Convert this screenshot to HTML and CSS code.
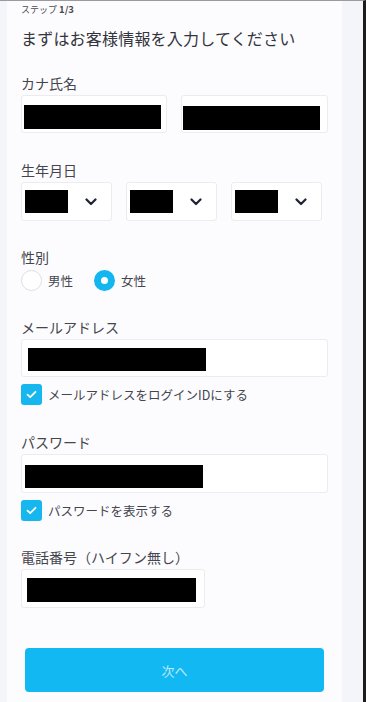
FILE: index.html
```html
<!DOCTYPE html>
<html>
<head>
    <meta charset="utf-8">
    <link rel="stylesheet" href="styles.css">
</head>
<body>
    <div class="page">
        <div class="panel">
            <div class="step">ステップ <b>1/3</b></div>
            <h1 class="title">まずはお客様情報を入力してください</h1>

            <div class="field">
                <div class="label">カナ氏名</div>
                <div class="row">
                    <div class="input input-name"><span class="redact redact-name"></span></div>
                    <div class="input input-name"><span class="redact redact-name"></span></div>
                </div>
            </div>

            <div class="field field-date">
                <div class="label">生年月日</div>
                <div class="row">
                    <div class="input select">
                        <span class="redact redact-date"></span>
                        <svg class="chevron" width="12" height="8" viewBox="0 0 12 8"><path d="M1.5 1.5 6 6l4.5-4.5" fill="none" stroke="#1e2235" stroke-width="2.2" stroke-linecap="round" stroke-linejoin="round"/></svg>
                    </div>
                    <div class="input select">
                        <span class="redact redact-date"></span>
                        <svg class="chevron" width="12" height="8" viewBox="0 0 12 8"><path d="M1.5 1.5 6 6l4.5-4.5" fill="none" stroke="#1e2235" stroke-width="2.2" stroke-linecap="round" stroke-linejoin="round"/></svg>
                    </div>
                    <div class="input select">
                        <span class="redact redact-date"></span>
                        <svg class="chevron" width="12" height="8" viewBox="0 0 12 8"><path d="M1.5 1.5 6 6l4.5-4.5" fill="none" stroke="#1e2235" stroke-width="2.2" stroke-linecap="round" stroke-linejoin="round"/></svg>
                    </div>
                </div>
            </div>

            <div class="field">
                <div class="label">性別</div>
                <div class="radios">
                    <label class="radio"><span class="radio-dot"></span>男性</label>
                    <label class="radio"><span class="radio-dot checked"></span>女性</label>
                </div>
            </div>

            <div class="field">
                <div class="label">メールアドレス</div>
                <div class="input input-email"><span class="redact redact-long"></span></div>
                <label class="check">
                    <span class="check-box"><svg width="11" height="9" viewBox="0 0 11 9"><path d="M1.5 4.6 4.2 7.2 9.5 1.8" fill="none" stroke="#fff" stroke-width="1.8" stroke-linecap="round" stroke-linejoin="round"/></svg></span>
                    メールアドレスをログインIDにする
                </label>
            </div>

            <div class="field field-pass">
                <div class="label">パスワード</div>
                <div class="input input-pass"><span class="redact redact-long"></span></div>
                <label class="check">
                    <span class="check-box"><svg width="11" height="9" viewBox="0 0 11 9"><path d="M1.5 4.6 4.2 7.2 9.5 1.8" fill="none" stroke="#fff" stroke-width="1.8" stroke-linecap="round" stroke-linejoin="round"/></svg></span>
                    パスワードを表示する
                </label>
            </div>

            <div class="field">
                <div class="label">電話番号（ハイフン無し）</div>
                <div class="input input-phone"><span class="redact redact-phone"></span></div>
            </div>

            <button class="next">次へ</button>
        </div>
        <div class="side"></div>
    </div>
</body>
</html>
```

FILE: styles.css
```css
html, body {
    margin: 0;
    padding: 0;
}
body {
    background: #f4f5f9;
    font-family: "Noto Sans CJK JP", "Noto Sans", sans-serif;
    color: #3d3e46;
}
.page {
    display: flex;
    height: 702px;
    border-top: 1px solid #9a9aa0;
    border-right: 3px solid #1c1c1e;
    box-sizing: border-box;
    width: 366px;
}
.panel {
    margin-left: 7px;
    width: 335px;
    background: #fcfcfe;
    padding: 1px 14px 0 14px;
    box-sizing: border-box;
}
.side {
    flex: 1;
}
.step {
    font-size: 9px;
    line-height: 14px;
    height: 14px;
    overflow: hidden;
    color: #4a4a52;
}
.step b {
    font-weight: bold;
    font-size: 9.5px;
}
.title {
    margin: 10px 0 0;
    font-size: 16px;
    line-height: 24px;
    height: 24px;
    font-weight: normal;
    letter-spacing: 0.2px;
    color: #33343c;
}
.field {
    margin-top: 23px;
}
.field + .field {
    margin-top: 26px;
}
.field + .field-date,
.field + .field-pass {
    margin-top: 27px;
}
.label {
    font-size: 14px;
    line-height: 20px;
    height: 20px;
    margin-bottom: 2px;
    color: #44454d;
}
.row {
    display: flex;
    gap: 14px;
}
.input {
    background: #fff;
    border: 1px solid #ebebf0;
    border-radius: 3px;
    box-sizing: border-box;
    height: 38px;
}
.redact {
    display: block;
    background: #000;
}
.input-name {
    width: 146px;
    padding: 9px 0 0 2px;
}
.input-name + .input-name {
    width: 147px;
    padding-top: 10px;
    padding-left: 1px;
}
.redact-name {
    width: 137px;
    height: 24px;
}
.select {
    width: 91px;
    height: 39px;
    display: flex;
    align-items: center;
    justify-content: space-between;
    padding: 0 14px 0 3px;
}
.redact-date {
    width: 43px;
    height: 23px;
}
.chevron {
    display: block;
}
.radios {
    display: flex;
    align-items: center;
    height: 22px;
}
.radio {
    display: flex;
    align-items: center;
    height: 22px;
    font-size: 12.5px;
    color: #44454d;
    margin-right: 21px;
}
.radio-dot {
    width: 21px;
    height: 21px;
    border-radius: 50%;
    border: 1px solid #dedee4;
    background: #fff;
    box-sizing: border-box;
    margin-right: 6px;
}
.radio-dot.checked {
    border: 7px solid #14b6ef;
    background: #fff;
}
.input-email {
    padding: 8px 0 0 6px;
}
.input-pass {
    height: 39px;
    padding: 10px 0 0 3px;
}
.redact-long {
    width: 178px;
    height: 23px;
}
.check {
    display: flex;
    align-items: center;
    height: 22px;
    margin-top: 6px;
    font-size: 12.5px;
    color: #44454d;
}
.check-box {
    width: 21px;
    height: 21px;
    border-radius: 3px;
    background: #16b6ef;
    display: flex;
    align-items: center;
    justify-content: center;
    margin-right: 6px;
}
.input-phone {
    width: 184px;
    height: 39px;
    padding: 8px 0 0 5px;
}
.redact-phone {
    width: 169px;
    height: 24px;
}
.next {
    display: block;
    margin: 40px 0 0 4px;
    width: 299px;
    height: 44px;
    border: none;
    border-radius: 4px;
    background: #12b8f1;
    color: rgba(255, 255, 255, 0.72);
    font-family: "Noto Sans CJK JP", sans-serif;
    font-size: 13px;
}
```
